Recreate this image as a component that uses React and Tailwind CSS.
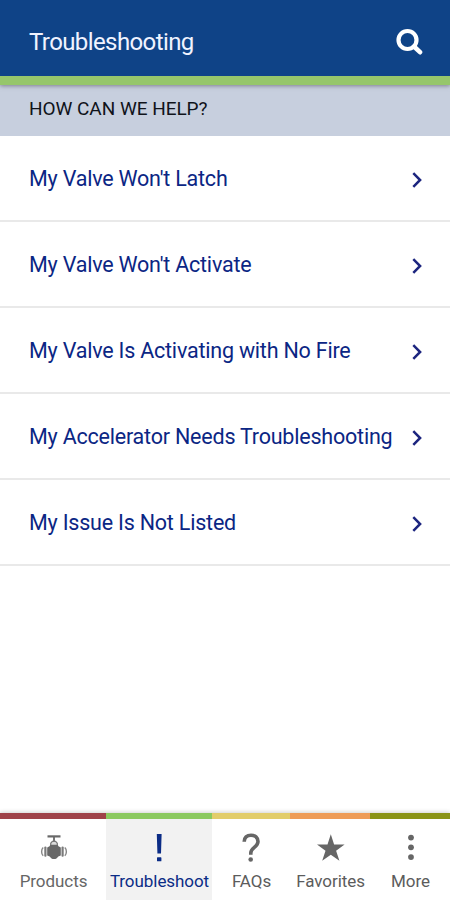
const issues = [
  "My Valve Won't Latch",
  "My Valve Won't Activate",
  'My Valve Is Activating with No Fire',
  'My Accelerator Needs Troubleshooting',
  'My Issue Is Not Listed',
];

function ValveIcon() {
  return (
    <svg className="h-[30px] w-[30px]" viewBox="0 0 30 30" fill="#686868">
      <rect x="9.500" y="2.300" width="13" height="2.200" />
      <rect x="15.100" y="4" width="1.800" height="4" />
      <path d="M12.700 12.500v-2.200l1.700-2h3.200l1.700 2v2.200" fill="#dcdcdc" stroke="#7a7a7a" strokeWidth="1.200" />
      <path d="M12.300 11.800h7.400l.8 1.500 2.300 1.300v8l-2.500.8c-1 1.700-2.500 2.600-4.300 2.600s-3.300-.9-4.300-2.600l-2.500-.8v-8l2.300-1.300z" />
      <rect x="6.300" y="13.600" width="2.200" height="10.200" rx="1" fill="#7a7a7a" />
      <rect x="23.500" y="13.600" width="2.200" height="10.200" rx="1" fill="#7a7a7a" />
      <path d="M5.200 14.600c-2.100 2-2.100 6.200 0 8.200M26.800 14.600c2.100 2 2.100 6.200 0 8.200" fill="none" stroke="#868686" strokeWidth="1.400" />
    </svg>
  );
}

function ExclamationIcon() {
  return (
    <svg className="h-[30px] w-[30px]" viewBox="0 0 30 30" fill="#0b2c86">
      <path d="M12.800 1h4.800l-.6 19.500h-3.600z" />
      <rect x="13" y="24.300" width="4.400" height="4" rx="0.600" />
    </svg>
  );
}

function QuestionIcon() {
  return (
    <svg className="h-[30px] w-[30px]" viewBox="0 0 30 30">
      <path d="M8.200 8.800C8.200 4.500 10.900 2.300 15 2.300s7 2.200 7 6.300c0 5.600-7.200 6-7.200 11.300v1.900" fill="none" stroke="#666" strokeWidth="3.600" />
      <circle cx="14.700" cy="26.500" r="2.300" fill="#666" />
    </svg>
  );
}

function StarIcon() {
  return (
    <svg className="h-[30px] w-[30px]" viewBox="0 0 30 30" fill="#666">
      <path d="M15.800 1.200l3.300 10.300h10.500l-8.500 6.300 3.300 9.900-8.600-6-8.600 6 3.300-9.900-8.500-6.300h10.500z" />
    </svg>
  );
}

function DotsIcon() {
  return (
    <svg className="h-[30px] w-[30px]" viewBox="0 0 30 30" fill="#666">
      <circle cx="16" cy="4.600" r="2.900" />
      <circle cx="16" cy="14.300" r="2.900" />
      <circle cx="16" cy="24.100" r="2.900" />
    </svg>
  );
}

const tabs = [
  { label: 'Products', Icon: ValveIcon, style: 'border-[#9f4249] text-[#666]' },
  { label: 'Troubleshoot', Icon: ExclamationIcon, style: 'border-[#8bc95f] bg-[#f2f2f2] text-[#0b2c86]' },
  { label: 'FAQs', Icon: QuestionIcon, style: 'border-[#e2cd6b] text-[#5c5c5c]' },
  { label: 'Favorites', Icon: StarIcon, style: 'border-[#ee9c58] text-[#5c5c5c]' },
  { label: 'More', Icon: DotsIcon, style: 'border-[#8b9417] text-[#5c5c5c]' },
];

export default function App() {
  return (
    <div className="flex h-[900px] w-[450px] flex-col overflow-hidden bg-white font-[Roboto,sans-serif]">
      <header className="z-10 flex h-[85px] shrink-0 items-center justify-between border-b-[9px] border-[#96c66b] bg-[#0f4387] pt-2 pr-[27px] pl-[29px] shadow-[0_1px_4px_rgba(60,50,70,0.5)]">
        <h1 className="text-[24px] leading-7 tracking-[-0.6px] text-[#f0f3ff]">Troubleshooting</h1>
        <svg className="h-7 w-7" viewBox="0 0 28 28" fill="none" stroke="#fff">
          <circle cx="12.500" cy="12" r="9" strokeWidth="4.200" />
          <path d="M19 18.500l6 5.700" strokeWidth="4.600" strokeLinecap="round" />
        </svg>
      </header>
      <main className="flex-1">
        <h2 className="h-[51px] bg-[#c7cfde] pt-3 pl-[29px] text-[19px] leading-6 tracking-[-0.04px] text-[#10131a]">HOW CAN WE HELP?</h2>
        <ul>
          {issues.map((label) => (
            <li key={label} className="flex h-[86px] items-center justify-between border-b-2 border-[#e9e9e9] pt-0.5 pr-[27px] pl-[29px]">
              <span className="text-[21.500px] leading-7 tracking-[-0.21px] whitespace-nowrap text-[#0b2684]">{label}</span>
              <svg className="mt-px h-4 w-3" viewBox="0 0 12 16" fill="none" stroke="#1c257f" strokeWidth="2.500">
                <path d="M2.300 1.200l6.800 6.800-6.800 6.800" />
              </svg>
            </li>
          ))}
        </ul>
      </main>
      <nav className="grid h-[87px] shrink-0 grid-cols-[106px_106px_78px_80px_80px] shadow-[0_-1px_4px_rgba(0,0,0,0.18)]">
        {tabs.map(({ label, Icon, style }) => (
          <div key={label} className={`flex flex-col items-center border-t-[6px] pt-[14px] ${style}`}>
            <Icon />
            <span className="mt-[5.500px] pl-px text-[17px] leading-6 tracking-[-0.06px] whitespace-nowrap">{label}</span>
          </div>
        ))}
      </nav>
    </div>
  );
}
